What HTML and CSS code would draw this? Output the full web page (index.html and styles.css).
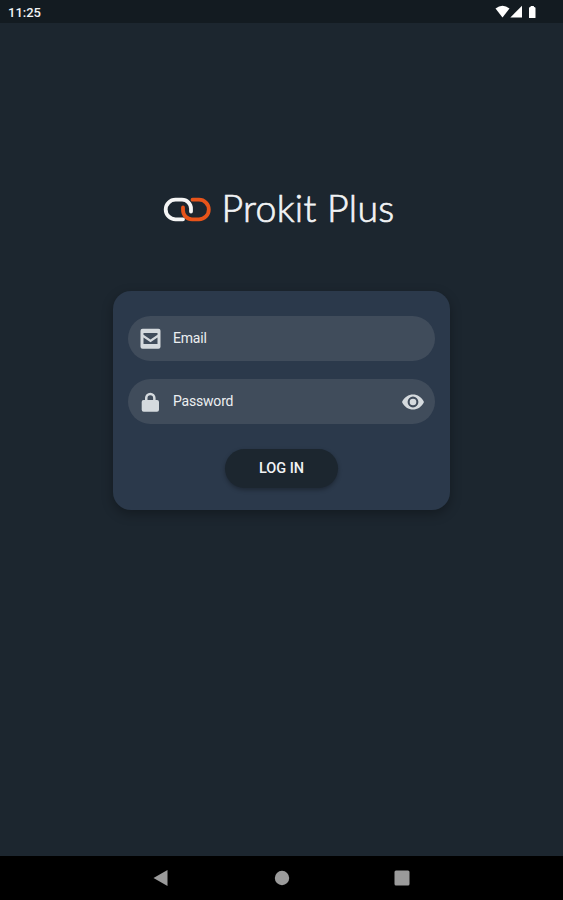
FILE: index.html
```html
<!DOCTYPE html>
<html lang="en">
<head>
  <meta charset="UTF-8">
  <meta name="viewport" content="width=device-width, initial-scale=1.0">
  <title>Prokit Plus</title>
  <link rel="stylesheet" href="styles.css">
</head>
<body>

  <!-- Status Bar -->
  <header class="status-bar">
    <span class="time">11:25</span>
    <svg class="status-icons" width="44" height="14" viewBox="0 0 44 14">
      <path d="M.5 3.400Q7.500-1.700 14.500 3.400L7.500 12.500z"/>
      <path d="M27 .8V12.500H15.300z"/>
      <path d="M34 3q0-1 1.600-1V1h3.300v1q1.600 0 1.600 1v9.500q0 .5-.5.5h-5.500q-.5 0-.5-.5z"/>
    </svg>
  </header>

  <main class="content">
    <!-- Logo -->
    <div class="brand">
      <svg class="brand-logo" width="48" height="26" viewBox="0 0 48 26">
        <path class="link-orange" d="M29.500 3.700H36a9.800 9.800 0 0 1 0 19.600H29a9 9 0 0 1-9-9V11.500"/>
        <path class="link-white" d="M20 23.300H12.500a9.800 9.800 0 0 1 0-19.600H19a9 9 0 0 1 9 9v2.800"/>
      </svg>
      <h1 class="brand-name">Prokit Plus</h1>
    </div>

    <!-- Login Form -->
    <form class="login-card">
      <label class="field">
        <svg class="field-icon" width="22" height="22" viewBox="0 0 22 22">
          <path fill-rule="evenodd" d="M2.500.8h16q2 0 2 2v16q0 2-2 2h-16q-2 0-2-2v-16q0-2 2-2zM3.500 5v1.800l7 4.700 7-4.700V5zM3.500 9.500v6.500h14V9.500l-7 4.700z"/>
        </svg>
        <input type="text" class="field-input" placeholder="Email">
      </label>
      <label class="field">
        <svg class="field-icon" width="22" height="22" viewBox="0 0 22 22">
          <path fill-rule="evenodd" d="M3.500 9H5V7a5.300 5.300 0 0 1 10.600 0v2h1.400q2 0 2 2v7.800q0 2-2 2H3.700q-2 0-2-2V11q0-2 1.800-2zM7.500 9h5.600V7a2.800 2.800 0 0 0-5.600 0z"/>
        </svg>
        <input type="password" class="field-input" placeholder="Password">
        <svg class="eye-icon" width="24" height="18" viewBox="0 0 24 18">
          <path fill-rule="evenodd" d="M1 9C5.500-1 18.500-1 23 9 18.500 19 5.500 19 1 9zM12 3.600a5.400 5.400 0 1 0 0 10.800 5.400 5.400 0 0 0 0-10.800z"/>
          <circle cx="12" cy="9" r="3.300"/>
        </svg>
      </label>
      <button type="button" class="login-btn">LOG IN</button>
    </form>
  </main>

  <!-- Navigation Bar -->
  <nav class="nav-bar">
    <svg width="16" height="18" viewBox="0 0 16 18"><path d="M14.500 1v16L.5 9z"/></svg>
    <svg width="16" height="18" viewBox="0 0 16 18"><circle cx="8" cy="9" r="7.200"/></svg>
    <svg width="16" height="18" viewBox="0 0 16 18"><rect x=".5" y="1.500" width="15" height="15" rx="1.500"/></svg>
  </nav>

</body>
</html>
```

FILE: styles.css
```css
* {
  box-sizing: border-box;
}

body {
  font-family: Roboto, sans-serif;
  margin: 0;
  height: 100vh;
  background-color: #1c262f;
  color: #f1f3f5;
  display: flex;
  flex-direction: column;
  overflow: hidden;
}

svg {
  display: block;
  flex: none;
}

.status-bar {
  height: 23px;
  padding: 1px 24px 0 8px;
  background-color: #131b21;
  display: flex;
  align-items: center;
  justify-content: space-between;
}

.time {
  font-size: 13px;
  font-weight: 500;
}

.status-icons {
  fill: #fff;
}

.content {
  flex: 1;
  display: flex;
  flex-direction: column;
  align-items: center;
}

/* Logo */
.brand {
  margin-top: 162px;
  margin-right: 5px;
  height: 48px;
  display: flex;
  align-items: center;
  gap: 10px;
}

.brand-logo {
  fill: none;
  stroke-width: 3.8px;
  stroke-linecap: round;
}

.link-white {
  stroke: #f5f5f5;
}

.link-orange {
  stroke: #e8541a;
}

.brand-name {
  margin: 0;
  padding-bottom: 2px;
  font-family: Lato, sans-serif;
  font-size: 37.5px;
  font-weight: 300;
  line-height: 48px;
  letter-spacing: 0.3px;
  white-space: nowrap;
  -webkit-text-stroke: 0.7px #f1f3f5;
}

/* Login card */
.login-card {
  width: 337px;
  height: 219px;
  margin-top: 58px;
  padding: 25px 15px 0;
  border-radius: 18px;
  background-color: #2b394b;
  box-shadow: 0 4px 12px rgba(0, 0, 0, 0.3);
  display: flex;
  flex-direction: column;
  align-items: center;
}

.field {
  width: 100%;
  height: 45px;
  margin-bottom: 18px;
  padding: 0 10px 0 12px;
  border-radius: 23px;
  background-color: #404c5b;
  display: flex;
  align-items: center;
}

.field-icon,
.eye-icon {
  fill: #d5dade;
}

.field-input {
  flex: 1;
  min-width: 0;
  margin-left: 11px;
  padding: 0 0 2px;
  border: none;
  outline: none;
  background: none;
  color: #f1f3f5;
  font-family: inherit;
  font-size: 14px;
  letter-spacing: -0.2px;
}

.field-input::placeholder {
  color: #eceff1;
  opacity: 1;
}

.login-btn {
  width: 113px;
  height: 39px;
  margin-top: 7px;
  padding: 0 0 1px;
  border: none;
  border-radius: 20px;
  background-color: #1c262f;
  box-shadow: 0 2px 4px rgba(0, 0, 0, 0.3);
  color: #f1f3f5;
  font-family: inherit;
  font-size: 14.5px;
  font-weight: 500;
  cursor: pointer;
}

/* Navigation bar */
.nav-bar {
  height: 44px;
  padding: 0 153px;
  background-color: #000;
  fill: #9b9b9b;
  display: flex;
  align-items: center;
  justify-content: space-between;
}
```
